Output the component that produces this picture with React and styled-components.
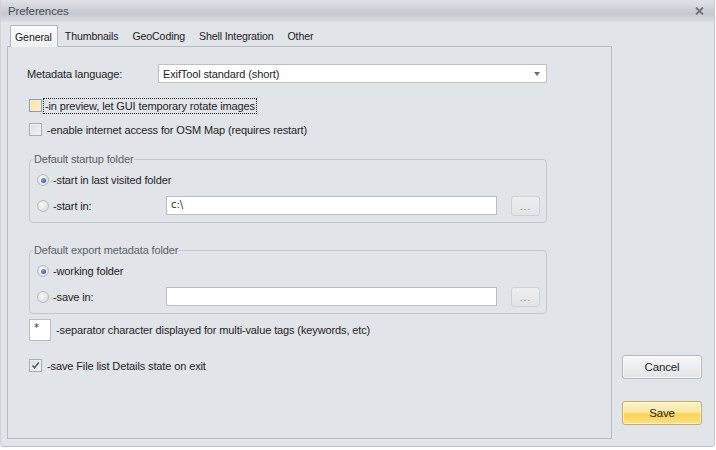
import React from 'react';
import styled, { createGlobalStyle } from 'styled-components';

const GlobalStyle = createGlobalStyle`
  html, body {
    margin: 0;
    padding: 0;
    background: #ffffff;
    font-family: "Liberation Sans", Arial, sans-serif;
    font-size: 11px;
    letter-spacing: -0.12px;
    color: #1e1e1e;
  }
`;

const Window = styled.div`
  width: 715px;
  height: 447px;
  background: #e1e4e8;
  border-left: 1px solid #cfd2d7;
  border-right: 1px solid #c3c6cc;
  border-bottom: 1px solid #b9bdc3;
  border-radius: 0 0 4px 4px;
  box-sizing: border-box;
  display: flex;
  flex-direction: column;
  overflow: hidden;
`;

const TitleBar = styled.div`
  height: 22px;
  flex: none;
  display: flex;
  align-items: center;
  justify-content: space-between;
  padding: 0 10px 1px 7px;
  background: linear-gradient(#dfe2e6 0%, #d3d6dc 30%, #c5c8d0 60%, #d4d7dc 85%, #e1e4e8 100%);
`;

const Title = styled.span`
  font-size: 11.5px;
  color: #474c56;
`;

const CloseIcon = () => (
  <svg width="9" height="8" viewBox="0 0 9 8">
    <path d="M1 0.5 L8 7.5 M8 0.5 L1 7.5" stroke="#6c717a" strokeWidth="1.8" />
  </svg>
);

const Body = styled.div`
  flex: 1;
  display: flex;
`;

const Main = styled.div`
  width: 605px;
  margin-left: 6px;
  display: flex;
  flex-direction: column;
  padding: 2px 0 7px;
`;

const Tabs = styled.div`
  display: flex;
  height: 21px;
  padding-left: 3px;
  position: relative;
  z-index: 1;
`;

const Tab = styled.div`
  padding: 0 ${p => (p.$active ? 5 : 6)}px 0 ${p => (p.$active ? 4 : 6)}px;
  display: flex;
  align-items: center;
  box-sizing: border-box;
  height: ${p => (p.$active ? 22 : 21)}px;
  border: 1px solid ${p => (p.$active ? '#b3b7be' : 'transparent')};
  border-bottom: none;
  border-radius: 2px 2px 0 0;
  background: ${p => (p.$active ? 'linear-gradient(#fbfbfc, #eff1f3)' : 'transparent')};
  color: #1b1b1b;
  font-size: 10.6px;
`;

const Panel = styled.div`
  flex: 1;
  border: 1px solid #b7bbc2;
  padding: 0 0 0 21px;
  display: flex;
  flex-direction: column;
  align-items: flex-start;
`;

const Row = styled.div`
  display: flex;
  align-items: center;
  margin-top: ${p => p.$mt || 0}px;
  margin-left: ${p => p.$ml || 0}px;
  height: ${p => p.$h || 15}px;
`;

const FieldLabel = styled.span`
  width: ${p => p.$w}px;
  flex: none;
`;

const Combo = styled.div`
  width: 389px;
  height: 19px;
  box-sizing: border-box;
  border: 1px solid #bcc0c7;
  background: #ffffff;
  display: flex;
  align-items: center;
  justify-content: space-between;
  padding: 0 6px 0 4px;
`;

const Arrow = styled.span`
  width: 0;
  height: 0;
  border-left: 3.5px solid transparent;
  border-right: 3.5px solid transparent;
  border-top: 4px solid #6a6e75;
  margin-top: 1px;
`;

const Box = styled.span`
  width: 13px;
  height: 13px;
  box-sizing: border-box;
  flex: none;
  border: 1px solid ${p => (p.$hover ? '#8e9bb0' : '#a8adb5')};
  background: ${p => (p.$hover ? 'linear-gradient(135deg, #fde2a4, #fdf0cf)' : 'linear-gradient(135deg, #d9dce1, #f3f4f6)')};
  box-shadow: inset 0 0 0 1px ${p => (p.$hover ? '#fbeccb' : '#eceef1')};
  display: flex;
  align-items: center;
  justify-content: center;
  margin-right: ${p => (p.$focus ? 2 : 4)}px;
`;

const CheckText = styled.span`
  padding: 0 1px;
  margin-left: ${p => p.$ml || 0}px;
  outline: ${p => (p.$focus ? '1px dotted #222' : 'none')};
  line-height: 14px;
`;

const Tick = () => (
  <svg width="9" height="9" viewBox="0 0 9 9">
    <path d="M1.5 4.5 L3.5 6.8 L7.8 1.5" stroke="#4c5a70" strokeWidth="1.5" fill="none" />
  </svg>
);

const Group = styled.fieldset`
  margin: ${p => p.$mt}px 0 0;
  width: 518px;
  box-sizing: border-box;
  border: 1px solid #c3c7cd;
  border-radius: 4px;
  padding: 0 6px 7px 7px;
  min-width: 0;
`;

const Legend = styled.legend`
  padding: 0 1px;
  margin-left: -4px;
  line-height: 13px;
  color: #5c6068;
`;

const Radio = styled.span`
  width: 12px;
  height: 12px;
  box-sizing: border-box;
  border-radius: 50%;
  flex: none;
  border: 1px solid #b6bac1;
  background: radial-gradient(circle at 40% 40%, #f7f8f9, #d4d7dc);
  display: flex;
  align-items: center;
  justify-content: center;
  margin-right: 4px;

  &::after {
    content: '';
    width: 5px;
    height: 5px;
    border-radius: 50%;
    background: ${p => (p.$checked ? 'radial-gradient(circle at 35% 35%, #7fa0d4, #2c4f8c)' : 'transparent')};
  }
`;

const TextInput = styled.div`
  width: ${p => p.$w}px;
  height: ${p => p.$h}px;
  box-sizing: border-box;
  border: 1px solid #b9bdc4;
  background: #ffffff;
  padding: 2px 4px;
  font-family: "DejaVu Sans", sans-serif;
  font-size: 10px;
  color: #333;
  flex: none;
`;

const DotsButton = styled.div`
  width: 29px;
  height: 20px;
  box-sizing: border-box;
  margin-left: 14px;
  border: 1px solid #cdd0d5;
  border-radius: 3px;
  background: linear-gradient(#eceef0, #e2e4e8);
  color: #8b8f96;
  font-size: 10px;
  letter-spacing: 1px;
  display: flex;
  align-items: flex-end;
  justify-content: center;
  padding-bottom: 3px;
  margin-top: 1px;
`;

const Side = styled.div`
  width: 80px;
  margin-left: 10px;
  padding-top: 332px;
  display: flex;
  flex-direction: column;
  gap: 22px;
`;

const Button = styled.div`
  height: 24px;
  box-sizing: border-box;
  border-radius: 3px;
  border: 1px solid ${p => (p.$primary ? '#c9ab63' : '#b4b8bf')};
  background: ${p => (p.$primary
    ? 'linear-gradient(#fdf1c6 0%, #fbe8a5 45%, #f9d34f 55%, #fbe08a 100%)'
    : 'linear-gradient(#f7f8f9 0%, #eceef1 50%, #e1e4e8 100%)')};
  box-shadow: inset 0 0 0 1px rgba(255, 255, 255, 0.6);
  display: flex;
  align-items: center;
  justify-content: center;
  font-size: 11.5px;
  color: #1e1e1e;
`;

export default function App() {
  return (
    <>
      <GlobalStyle />
      <Window>
        <TitleBar>
          <Title>Preferences</Title>
          <CloseIcon />
        </TitleBar>
        <Body>
          <Main>
            <Tabs>
              <Tab $active>General</Tab>
              <Tab>Thumbnails</Tab>
              <Tab>GeoCoding</Tab>
              <Tab>Shell Integration</Tab>
              <Tab>Other</Tab>
            </Tabs>
            <Panel>
              <Row $mt={17} $ml={-2} $h={19}>
                <FieldLabel $w={131}>Metadata language:</FieldLabel>
                <Combo>
                  <span>ExifTool standard (short)</span>
                  <Arrow />
                </Combo>
              </Row>
              <Row $mt={15}>
                <Box $hover $focus />
                <CheckText $focus>-in preview, let GUI temporary rotate images</CheckText>
              </Row>
              <Row $mt={9}>
                <Box />
                <CheckText>-enable internet access for OSM Map (requires restart)</CheckText>
              </Row>
              <Group $mt={16}>
                <Legend>Default startup folder</Legend>
                <Row $mt={6} $h={16}>
                  <Radio $checked />
                  <span>-start in last visited folder</span>
                </Row>
                <Row $mt={8} $h={19}>
                  <Radio />
                  <FieldLabel $w={113}>-start in:</FieldLabel>
                  <TextInput $w={331} $h={19}>c:\</TextInput>
                  <DotsButton>...</DotsButton>
                </Row>
              </Group>
              <Group $mt={21}>
                <Legend>Default export metadata folder</Legend>
                <Row $mt={6} $h={16}>
                  <Radio $checked />
                  <span>-working folder</span>
                </Row>
                <Row $mt={8} $h={19}>
                  <Radio />
                  <FieldLabel $w={113}>-save in:</FieldLabel>
                  <TextInput $w={331} $h={19} />
                  <DotsButton>...</DotsButton>
                </Row>
              </Group>
              <Row $mt={5} $h={22}>
                <TextInput $w={22} $h={22}>*</TextInput>
                <CheckText $ml={4}>-separator character displayed for multi-value tags (keywords, etc)</CheckText>
              </Row>
              <Row $mt={17}>
                <Box><Tick /></Box>
                <CheckText>-save File list Details state on exit</CheckText>
              </Row>
            </Panel>
          </Main>
          <Side>
            <Button>Cancel</Button>
            <Button $primary>Save</Button>
          </Side>
        </Body>
      </Window>
    </>
  );
}
